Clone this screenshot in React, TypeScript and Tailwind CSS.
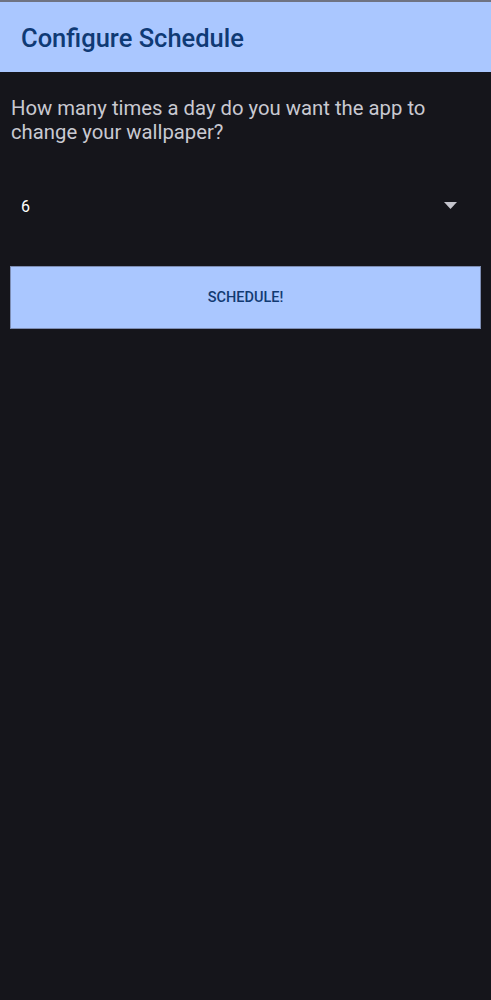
export default function App() {
    return (
        <div className="flex min-h-[1000px] flex-col bg-[#15151b] font-['Roboto','Liberation_Sans',sans-serif]">
            <div className="h-[2px] bg-[#6f7382]" />
            <header className="flex h-[70px] items-center bg-[#aac7ff] px-[21px] pt-[3px]">
                <h1 className="text-[25.5px] font-medium text-[#0f3a75]">
                    Configure Schedule
                </h1>
            </header>

            <div className="flex flex-col px-[10px] pt-[24px]">
                <p className="pl-px text-[20.3px] leading-[24px] text-[#c9c9d1]">
                    How many times a day do you want the app to change your
                    wallpaper?
                </p>

                <div className="mt-[43px] flex h-[40px] items-center justify-between pl-[11px] pr-[24px]">
                    <span className="text-[16px] text-white">6</span>
                    <svg width="13" height="7" viewBox="0 0 13 7" className="-mt-[3px]">
                        <path d="M0 0h13L6.5 7z" fill="#c4c4cc" />
                    </svg>
                </div>

                <button className="mt-[39px] flex h-[63px] items-center justify-center border border-[#7d8db3] bg-[#aac7ff] text-[14.5px] font-medium text-[#123a72]">
                    SCHEDULE!
                </button>
            </div>
        </div>
    );
}
